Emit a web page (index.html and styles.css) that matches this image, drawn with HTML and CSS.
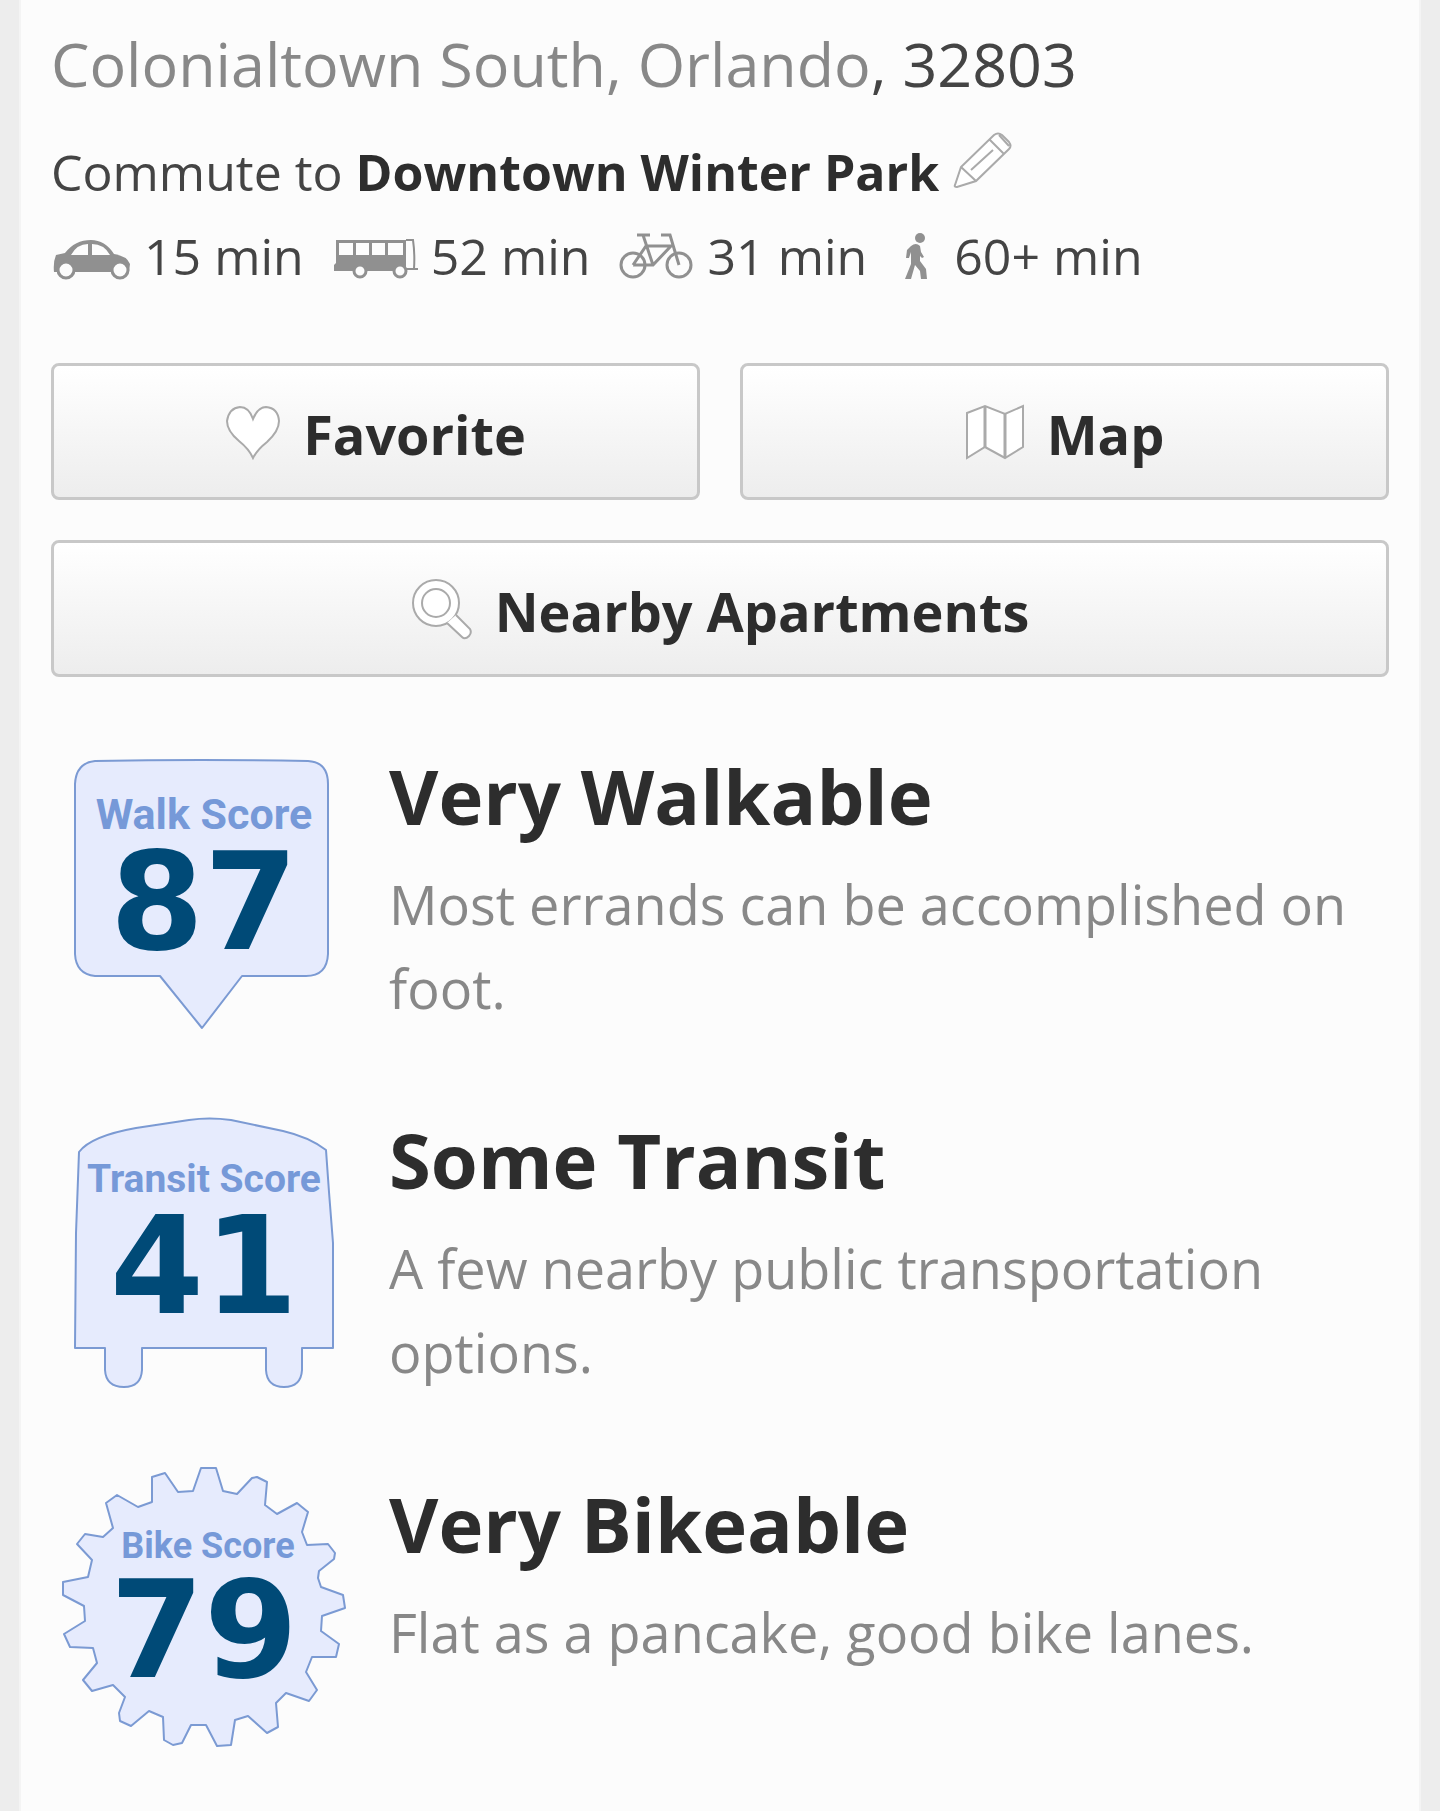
FILE: index.html
```html
<!DOCTYPE html>
<html lang="en">
<head>
    <meta charset="utf-8">
    <meta name="viewport" content="width=device-width, initial-scale=1">
    <title>Colonialtown South, Orlando, 32803</title>
    <link rel="stylesheet" href="styles.css">
</head>
<body>
    <main class="card">
        <h1 class="location"><a href="#">Colonialtown South</a><span class="sep">,</span> <a href="#">Orlando</a>, 32803</h1>

        <section class="commute">
            <p class="commute-title">Commute to <strong>Downtown Winter Park</strong>
                <button type="button" class="edit-btn" aria-label="Edit commute">
                    <svg width="62" height="60" viewBox="0 0 62 60">
                        <path d="M3 54 L9 36 L42 4 Q46 1 50 4 L57 11 Q60 15 57 18 L24 50 L5 56 Q2 56 3 54 Z M9 36 L24 50 M38 9 L52 23 M19 39 L41 19 M47 4 L57 15"/>
                    </svg>
                </button>
            </p>
            <ul class="commute-times">
                <li>
                    <svg width="80" height="48" viewBox="0 0 80 48">
                        <path class="solid" d="M5 23 L14 21 Q24 8 40 8 Q54 8 63 22 Q76 24 79 32 L78 40 L3 40 Q2 30 5 23 Z"/>
                        <path class="hole" d="M20 23 Q26 12 37 12 L37 23 Z M41 12 Q53 12 59 23 L41 23 Z"/>
                        <circle class="wheel" cx="15" cy="38" r="8"/>
                        <circle class="wheel" cx="69" cy="38" r="8"/>
                    </svg>
                    15 min
                </li>
                <li>
                    <svg width="86" height="48" viewBox="0 0 86 48">
                        <path class="solid" d="M4 8 H74 V39 H2 V33 L4 31 Z"/>
                        <path class="hole" d="M7 11 H21 V23 H7 Z M24 11 H37 V23 H24 Z M40 11 H53 V23 H40 Z M56 11 H71 V23 H56 Z"/>
                        <path class="line thin" d="M74 8 H81 Q83 22 82 37 M74 37 H86"/>
                        <circle class="wheel" cx="28" cy="39" r="6"/>
                        <circle class="wheel" cx="68" cy="39" r="6"/>
                    </svg>
                    52 min
                </li>
                <li>
                    <svg width="76" height="48" viewBox="0 0 76 48">
                        <circle class="line" cx="14" cy="33" r="12"/>
                        <circle class="line" cx="60" cy="33" r="12"/>
                        <path class="line" d="M14 33 L27 14 H52 L34 33 H14 M34 33 L24 3 M18 3 H31 M42 3 H51 L60 33"/>
                    </svg>
                    31 min
                </li>
                <li>
                    <svg width="46" height="48" viewBox="0 0 46 48">
                        <circle class="solid" cx="25" cy="6" r="5"/>
                        <path class="solid" d="M16 14 Q21 10 25 14 L26 20 L29 25 L27 26 L25 24 V29 L31 37 L32 47 L26 47 L25 39 L20 33 L16 47 L10 47 L16 32 V20 L14 26 H11 L12 18 Z"/>
                    </svg>
                    60+ min
                </li>
            </ul>
        </section>

        <div class="actions">
            <button type="button" class="btn">
                <svg width="56" height="56" viewBox="0 0 56 56">
                    <path d="M28 54 Q24 45 14 37 Q2 27 2 17 Q4 4 15 3 Q24 3 28 15 Q33 3 41 3 Q53 4 54 17 Q54 27 42 38 Q32 46 28 54 Z"/>
                </svg>
                <span>Favorite</span>
            </button>
            <button type="button" class="btn">
                <svg width="60" height="56" viewBox="0 0 60 56">
                    <path d="M2 9 L20 2 L40 10 L58 2 V43 L40 54 L20 43 L2 54 Z"/>
                    <path class="fold" d="M20 2 V43 M40 10 V54"/>
                </svg>
                <span>Map</span>
            </button>
            <button type="button" class="btn wide">
                <svg width="62" height="62" viewBox="0 0 62 62">
                    <circle cx="25" cy="25" r="23"/>
                    <circle cx="25" cy="25" r="14"/>
                    <path d="M36 45 L51 59 Q54 62 58 58 Q61 55 59 51 L45 37"/>
                </svg>
                <span>Nearby Apartments</span>
            </button>
        </div>

        <section class="score">
            <svg class="badge" viewBox="0 0 306 300" role="img" aria-label="Walk Score 87">
                <path d="M44 23 Q150 21 257 23 Q277 24 277 46 V216 Q276 238 255 238 H191 L151 290 L109 238 H44 Q25 236 24 216 V46 Q25 25 44 23 Z"/>
                <text class="badge-label" x="153" y="91">Walk Score</text>
                <text class="badge-number" x="153" y="211">87</text>
            </svg>
            <div class="score-info">
                <h2>Very Walkable</h2>
                <p>Most errands can be accomplished on foot.</p>
            </div>
        </section>

        <section class="score">
            <svg class="badge" viewBox="0 0 306 300" role="img" aria-label="Transit Score 41">
                <path d="M28 50 Q40 34 85 26 L138 18 Q158 15 180 18 L232 29 Q258 35 275 48 L278 90 L282 141 V246 H251 V268 Q250 285 233 285 Q216 285 215 268 V246 H91 V268 Q90 285 73 285 Q55 285 54 268 V246 H24 L25 131 Z"/>
                <text class="badge-label medium" x="153" y="90">Transit Score</text>
                <text class="badge-number" x="153" y="211">41</text>
            </svg>
            <div class="score-info">
                <h2>Some Transit</h2>
                <p>A few nearby public transportation options.</p>
            </div>
        </section>

        <section class="score">
            <svg class="badge" viewBox="0 0 306 300" role="img" aria-label="Bike Score 79">
                <path d="M150 2 H165 L172 25 L186 28 L201 12 L206 11 L216 16 L214 39 L226 48 L246 37 L257 46 L251 66 L256 79 L277 78 L284 87 L283 93 L268 105 L267 112 L270 121 L292 129 L294 142 L271 150 L270 165 L288 178 L285 191 H261 L255 206 L266 224 L258 235 L235 227 L225 237 L227 261 L216 267 L197 250 L184 254 L180 279 L166 280 L155 259 H140 L131 277 L122 279 L113 274 L112 251 L98 245 L80 260 L69 255 L68 247 L74 231 L62 219 L41 225 L32 214 L46 197 L42 182 L19 181 L13 168 L34 155 L33 140 L12 129 V116 L37 111 L41 94 L26 78 L34 68 L52 71 L62 62 L55 37 L66 29 L87 41 L101 36 V11 L114 7 L127 26 L142 25 Z"/>
                <text class="badge-label small" x="157" y="92">Bike Score</text>
                <text class="badge-number" x="153" y="211">79</text>
            </svg>
            <div class="score-info">
                <h2>Very Bikeable</h2>
                <p>Flat as a pancake, good bike lanes.</p>
            </div>
        </section>
    </main>
</body>
</html>
```
FILE: styles.css
```css
* {
    margin: 0;
    padding: 0;
    box-sizing: border-box;
}

body {
    font-family: "Open Sans", "Noto Sans", sans-serif;
    font-size: 50px;
    line-height: 84px;
    color: #444;
    background: #ededed;
}

.card {
    min-height: 100vh;
    margin: 0 19px;
    padding: 22px 30px 36px;
    background: #fcfcfc;
    border: solid #f4f4f4;
    border-width: 0 2px;
}

.location {
    font-size: 61px;
    font-weight: 400;
    margin-bottom: 24px;
}

.location a,
.location .sep {
    color: #888;
    text-decoration: none;
}

strong {
    font-weight: 700;
    color: #2d2d2d;
}

.edit-btn {
    border: none;
    background: none;
    cursor: pointer;
    line-height: 0;
    vertical-align: baseline;
}

.edit-btn svg,
.btn svg {
    fill: #fff;
    stroke: #aaa;
    stroke-width: 2;
}

.commute-times {
    display: flex;
    flex-wrap: wrap;
    column-gap: 28px;
    list-style: none;
}

.commute-times li {
    display: flex;
    align-items: center;
    gap: 13px;
}

.solid {
    fill: #909090;
}

.hole {
    fill: #fcfcfc;
}

.wheel {
    fill: #fcfcfc;
    stroke: #909090;
    stroke-width: 3;
}

.line {
    fill: none;
    stroke: #909090;
    stroke-width: 3;
}

.thin {
    stroke-width: 2;
}

.actions {
    display: grid;
    grid-template-columns: 1fr 1fr;
    gap: 40px;
    margin: 65px 0 61px;
}

.btn {
    display: flex;
    align-items: center;
    justify-content: center;
    gap: 22px;
    height: 137px;
    font: 700 54px/84px "Open Sans", "Noto Sans", sans-serif;
    color: #2d2d2d;
    background: linear-gradient(#fff, #ededed);
    border: 3px solid #c8c8c8;
    border-radius: 8px;
    cursor: pointer;
}

.btn span {
    padding-top: 4px;
}

.btn .fold {
    stroke-width: 3;
}

.wide {
    grid-column: 1 / -1;
}

.score {
    display: flex;
    gap: 32px;
    min-height: 300px;
    margin-bottom: 64px;
}

.badge {
    flex: none;
    width: 306px;
    height: 300px;
}

.badge path {
    fill: #e6ebfd;
    stroke: #7b9ad3;
    stroke-width: 2;
    stroke-linejoin: round;
}

.badge text {
    text-anchor: middle;
    font-weight: 700;
}

.badge-label {
    font-family: Roboto, "Liberation Sans", sans-serif;
    font-size: 43px;
    fill: #7699d8;
}

.badge-label.medium {
    font-size: 39px;
}

.badge-label.small {
    font-size: 36px;
}

.badge-number {
    font-family: "DejaVu Sans", Verdana, sans-serif;
    font-size: 135px;
    fill: #004a77;
}

.score-info {
    padding-top: 16px;
}

.score-info h2 {
    font-size: 76px;
    color: #2d2d2d;
    margin-bottom: 24px;
}

.score-info p {
    font-size: 54px;
    color: #888;
}
```
